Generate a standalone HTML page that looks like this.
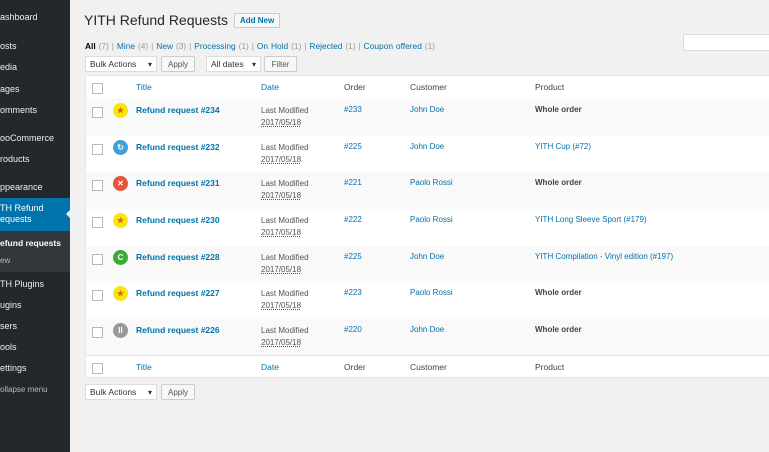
<!DOCTYPE html>
<html><head><style>
body{margin:0;width:769px;height:452px;overflow:hidden;background:#f1f1f1;font-family:"Liberation Sans",sans-serif;font-size:8px;color:#444;position:relative}
#sb{position:absolute;left:0;top:0;width:70px;height:452px;background:#23282d}
.m{position:absolute;left:0;color:#eee;font-size:9px;white-space:nowrap}
a{color:#0073aa;text-decoration:none}
.abs{position:absolute;white-space:nowrap}
.btn{position:absolute;border:1px solid #ccc;background:#f7f7f7;border-radius:2px;height:16px;line-height:15px;font-size:8px;color:#555;text-align:center;box-sizing:border-box}
.sel{position:absolute;border:1px solid #ddd;background:#fff;height:16px;line-height:15px;font-size:8.5px;color:#333;padding-left:4px;box-sizing:border-box}
.sel:after{content:"▾";position:absolute;right:4px;font-size:8px}
#tbl{position:absolute;left:85px;top:75px;width:684px;height:303px;background:#fff;border:1px solid #e5e5e5;border-right:0;box-sizing:border-box}
.row{position:absolute;left:0;width:684px;height:37px}
.cb{position:absolute;left:6px;width:9px;height:9px;border:1px solid #b4b9be;background:#fff}
.ic{position:absolute;left:27px;width:15px;height:15px;border-radius:50%;color:#fff;font-size:8px;font-weight:bold;text-align:center;line-height:15px}
.t{position:absolute;left:50px;font-weight:bold;color:#0073aa;font-size:8.5px}
.d{position:absolute;left:175px;color:#555;line-height:11.5px}
.d u{text-decoration:underline dotted}
.o{position:absolute;left:258px;color:#0073aa}
.c{position:absolute;left:324px;color:#0073aa}
.p{position:absolute;left:449px;color:#0073aa}
.pb{position:absolute;left:449px;font-weight:bold;color:#444}
.h{position:absolute;font-size:8.5px}
</style></head><body>
<div id="sb">
<div class="m" style="top:12px">ashboard</div>
<div class="m" style="top:41px">osts</div>
<div class="m" style="top:62px">edia</div>
<div class="m" style="top:84px">ages</div>
<div class="m" style="top:105px">omments</div>
<div class="m" style="top:133px">ooCommerce</div>
<div class="m" style="top:154px">roducts</div>
<div class="m" style="top:182px">ppearance</div>
<div style="position:absolute;top:198px;left:0;width:70px;height:33px;background:#0073aa"></div>
<div style="position:absolute;top:209px;left:66px;width:0;height:0;border:5px solid transparent;border-right-color:#f1f1f1;border-left:0"></div>
<div class="m" style="top:203px;color:#fff;line-height:11px">TH Refund<br>equests</div>
<div style="position:absolute;top:231px;left:0;width:70px;height:41px;background:#32373c"></div>
<div class="m" style="top:238px;font-weight:bold;color:#fff;font-size:8.5px">efund requests</div>
<div class="m" style="top:256px;color:#b4b9be;font-size:8px">ew</div>
<div class="m" style="top:279px">TH Plugins</div>
<div class="m" style="top:300px">ugins</div>
<div class="m" style="top:321px">sers</div>
<div class="m" style="top:342px">ools</div>
<div class="m" style="top:363px">ettings</div>
<div class="m" style="top:385px;color:#b4b9be;font-size:8px">ollapse menu</div>
</div>
<div class="abs" style="left:84px;top:12px;font-size:14px;color:#23282d">YITH Refund Requests</div>
<div class="abs" style="left:234px;top:13px;border:1px solid #ccc;background:#f7f7f7;padding:2px 5px;font-size:8px;font-weight:bold;color:#0073aa">Add New</div>
<div class="abs" style="left:85px;top:41px;font-size:8.4px;color:#999;word-spacing:0.6px"><b style="color:#000">All</b> (7) | <a>Mine</a> (4) | <a>New</a> (3) | <a>Processing</a> (1) | <a>On Hold</a> (1) | <a>Rejected</a> (1) | <a>Coupon offered</a> (1)</div>
<div class="abs" style="left:683px;top:34px;width:90px;height:15px;background:#fff;border:1px solid #ddd"></div>
<div class="sel" style="left:85px;top:56px;width:72px">Bulk Actions</div>
<div class="btn" style="left:161px;top:56px;width:34px">Apply</div>
<div class="sel" style="left:206px;top:56px;width:55px">All dates</div>
<div class="btn" style="left:264px;top:56px;width:33px">Filter</div>
<div id="tbl">
<div class="row" style="top:0;height:23px;border-bottom:1px solid #e1e1e1">
<div class="cb" style="top:7px"></div><a class="h" style="left:50px;top:6px">Title</a><a class="h" style="left:175px;top:6px">Date</a><span class="h" style="left:258px;top:6px">Order</span><span class="h" style="left:324px;top:6px">Customer</span><span class="h" style="left:449px;top:6px">Product</span></div>

<div class="row" style="top:23px;background:#f9f9f9"><div class="cb" style="top:8px"></div><div class="ic" style="top:4px;background:#f5e60c;color:#e85c1a">★</div><div class="t" style="top:6px">Refund request #234</div><div class="d" style="top:6px">Last Modified<br><u>2017/05/18</u></div><div class="o" style="top:6px">#233</div><div class="c" style="top:6px">John Doe</div><div class="pb" style="top:6px">Whole order</div></div>
<div class="row" style="top:60px"><div class="cb" style="top:8px"></div><div class="ic" style="top:4px;background:#3ea0dc">↻</div><div class="t" style="top:6px">Refund request #232</div><div class="d" style="top:6px">Last Modified<br><u>2017/05/18</u></div><div class="o" style="top:6px">#225</div><div class="c" style="top:6px">John Doe</div><div class="p" style="top:6px">YITH Cup (#72)</div></div>
<div class="row" style="top:96px;background:#f9f9f9"><div class="cb" style="top:8px"></div><div class="ic" style="top:4px;background:#e8533a">✕</div><div class="t" style="top:6px">Refund request #231</div><div class="d" style="top:6px">Last Modified<br><u>2017/05/18</u></div><div class="o" style="top:6px">#221</div><div class="c" style="top:6px">Paolo Rossi</div><div class="pb" style="top:6px">Whole order</div></div>
<div class="row" style="top:133px"><div class="cb" style="top:8px"></div><div class="ic" style="top:4px;background:#f5e60c;color:#e85c1a">★</div><div class="t" style="top:6px">Refund request #230</div><div class="d" style="top:6px">Last Modified<br><u>2017/05/18</u></div><div class="o" style="top:6px">#222</div><div class="c" style="top:6px">Paolo Rossi</div><div class="p" style="top:6px">YITH Long Sleeve Sport (#179)</div></div>
<div class="row" style="top:170px;background:#f9f9f9"><div class="cb" style="top:8px"></div><div class="ic" style="top:4px;background:#3aaa35">C</div><div class="t" style="top:6px">Refund request #228</div><div class="d" style="top:6px">Last Modified<br><u>2017/05/18</u></div><div class="o" style="top:6px">#225</div><div class="c" style="top:6px">John Doe</div><div class="p" style="top:6px">YITH Compilation - Vinyl edition (#197)</div></div>
<div class="row" style="top:206px"><div class="cb" style="top:8px"></div><div class="ic" style="top:4px;background:#f5e60c;color:#e85c1a">★</div><div class="t" style="top:6px">Refund request #227</div><div class="d" style="top:6px">Last Modified<br><u>2017/05/18</u></div><div class="o" style="top:6px">#223</div><div class="c" style="top:6px">Paolo Rossi</div><div class="pb" style="top:6px">Whole order</div></div>
<div class="row" style="top:243px;background:#f9f9f9"><div class="cb" style="top:8px"></div><div class="ic" style="top:4px;background:#999">II</div><div class="t" style="top:6px">Refund request #226</div><div class="d" style="top:6px">Last Modified<br><u>2017/05/18</u></div><div class="o" style="top:6px">#220</div><div class="c" style="top:6px">John Doe</div><div class="pb" style="top:6px">Whole order</div></div>
<div class="row" style="top:279px;height:23px;border-top:1px solid #e1e1e1">
<div class="cb" style="top:7px"></div><a class="h" style="left:50px;top:6px">Title</a><a class="h" style="left:175px;top:6px">Date</a><span class="h" style="left:258px;top:6px">Order</span><span class="h" style="left:324px;top:6px">Customer</span><span class="h" style="left:449px;top:6px">Product</span></div>
</div>
<div class="sel" style="left:85px;top:384px;width:72px">Bulk Actions</div>
<div class="btn" style="left:161px;top:384px;width:34px">Apply</div>
</body></html>
